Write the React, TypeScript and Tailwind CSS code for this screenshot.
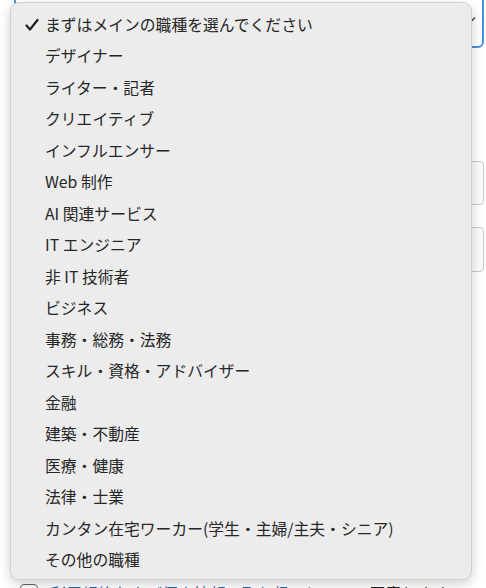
const jobs = [
  "まずはメインの職種を選んでください",
  "デザイナー",
  "ライター・記者",
  "クリエイティブ",
  "インフルエンサー",
  "Web 制作",
  "AI 関連サービス",
  "IT エンジニア",
  "非 IT 技術者",
  "ビジネス",
  "事務・総務・法務",
  "スキル・資格・アドバイザー",
  "金融",
  "建築・不動産",
  "医療・健康",
  "法律・士業",
  "カンタン在宅ワーカー(学生・主婦/主夫・シニア)",
  "その他の職種",
];

const Check = () => (
  <svg width="14" height="13" viewBox="0 0 14 13" className="absolute left-[14px] top-1/2 -translate-y-1/2">
    <path d="M1.5 7 L5 11 L12.5 1.5" fill="none" stroke="#1f1f1f" strokeWidth="2.2" strokeLinecap="round" strokeLinejoin="round" />
  </svg>
);

export default function App() {
  return (
    <div
      className="relative h-[588px] w-[486px] overflow-hidden bg-white"
      style={{ fontFamily: '"Noto Sans CJK JP", "Noto Sans", sans-serif' }}
    >
      {/* form behind the open menu */}
      <div className="flex flex-col pl-[14px] pr-[2px]">
        <div className="mt-[-10px] flex h-[58px] items-center justify-end rounded-md border-2 border-[#4a90d9] pr-[6px]">
          <svg width="8" height="6" viewBox="0 0 8 6">
            <path d="M1 1.5 L4 4.5 L7 1.5" fill="none" stroke="#333" strokeWidth="1.3" />
          </svg>
        </div>
        <div className="mt-[113px] h-[44px] rounded border border-[#c8c8c8] bg-[#fafafa]" />
        <div className="mt-[22px] h-[45px] rounded border border-[#c8c8c8] bg-[#fafafa]" />
        <div className="mt-[310px] flex items-center gap-[12px] pl-[6px] text-[16px] leading-[22px] whitespace-nowrap">
          <span className="h-[18px] w-[18px] shrink-0 rounded-sm border border-[#666]" />
          <span>
            <span className="text-[#1f5fb4] underline">利用規約および個人情報の取り扱い</span>
            <span className="text-[#222]">について同意します</span>
          </span>
        </div>
      </div>

      {/* native select menu */}
      <ul className="absolute left-[10px] top-[2px] w-[462px] rounded-[9px] border border-[#cfcfcf] bg-[#ececec] pt-[6px] pb-[3px] shadow-[0_4px_12px_rgba(0,0,0,0.18)]">
        {jobs.map((job, i) => (
          <li
            key={job}
            className="relative flex h-[31.5px] items-center pl-[34px] text-[15.8px] text-[#262626] whitespace-nowrap"
          >
            {i === 0 && <Check />}
            {job}
          </li>
        ))}
      </ul>
    </div>
  );
}
